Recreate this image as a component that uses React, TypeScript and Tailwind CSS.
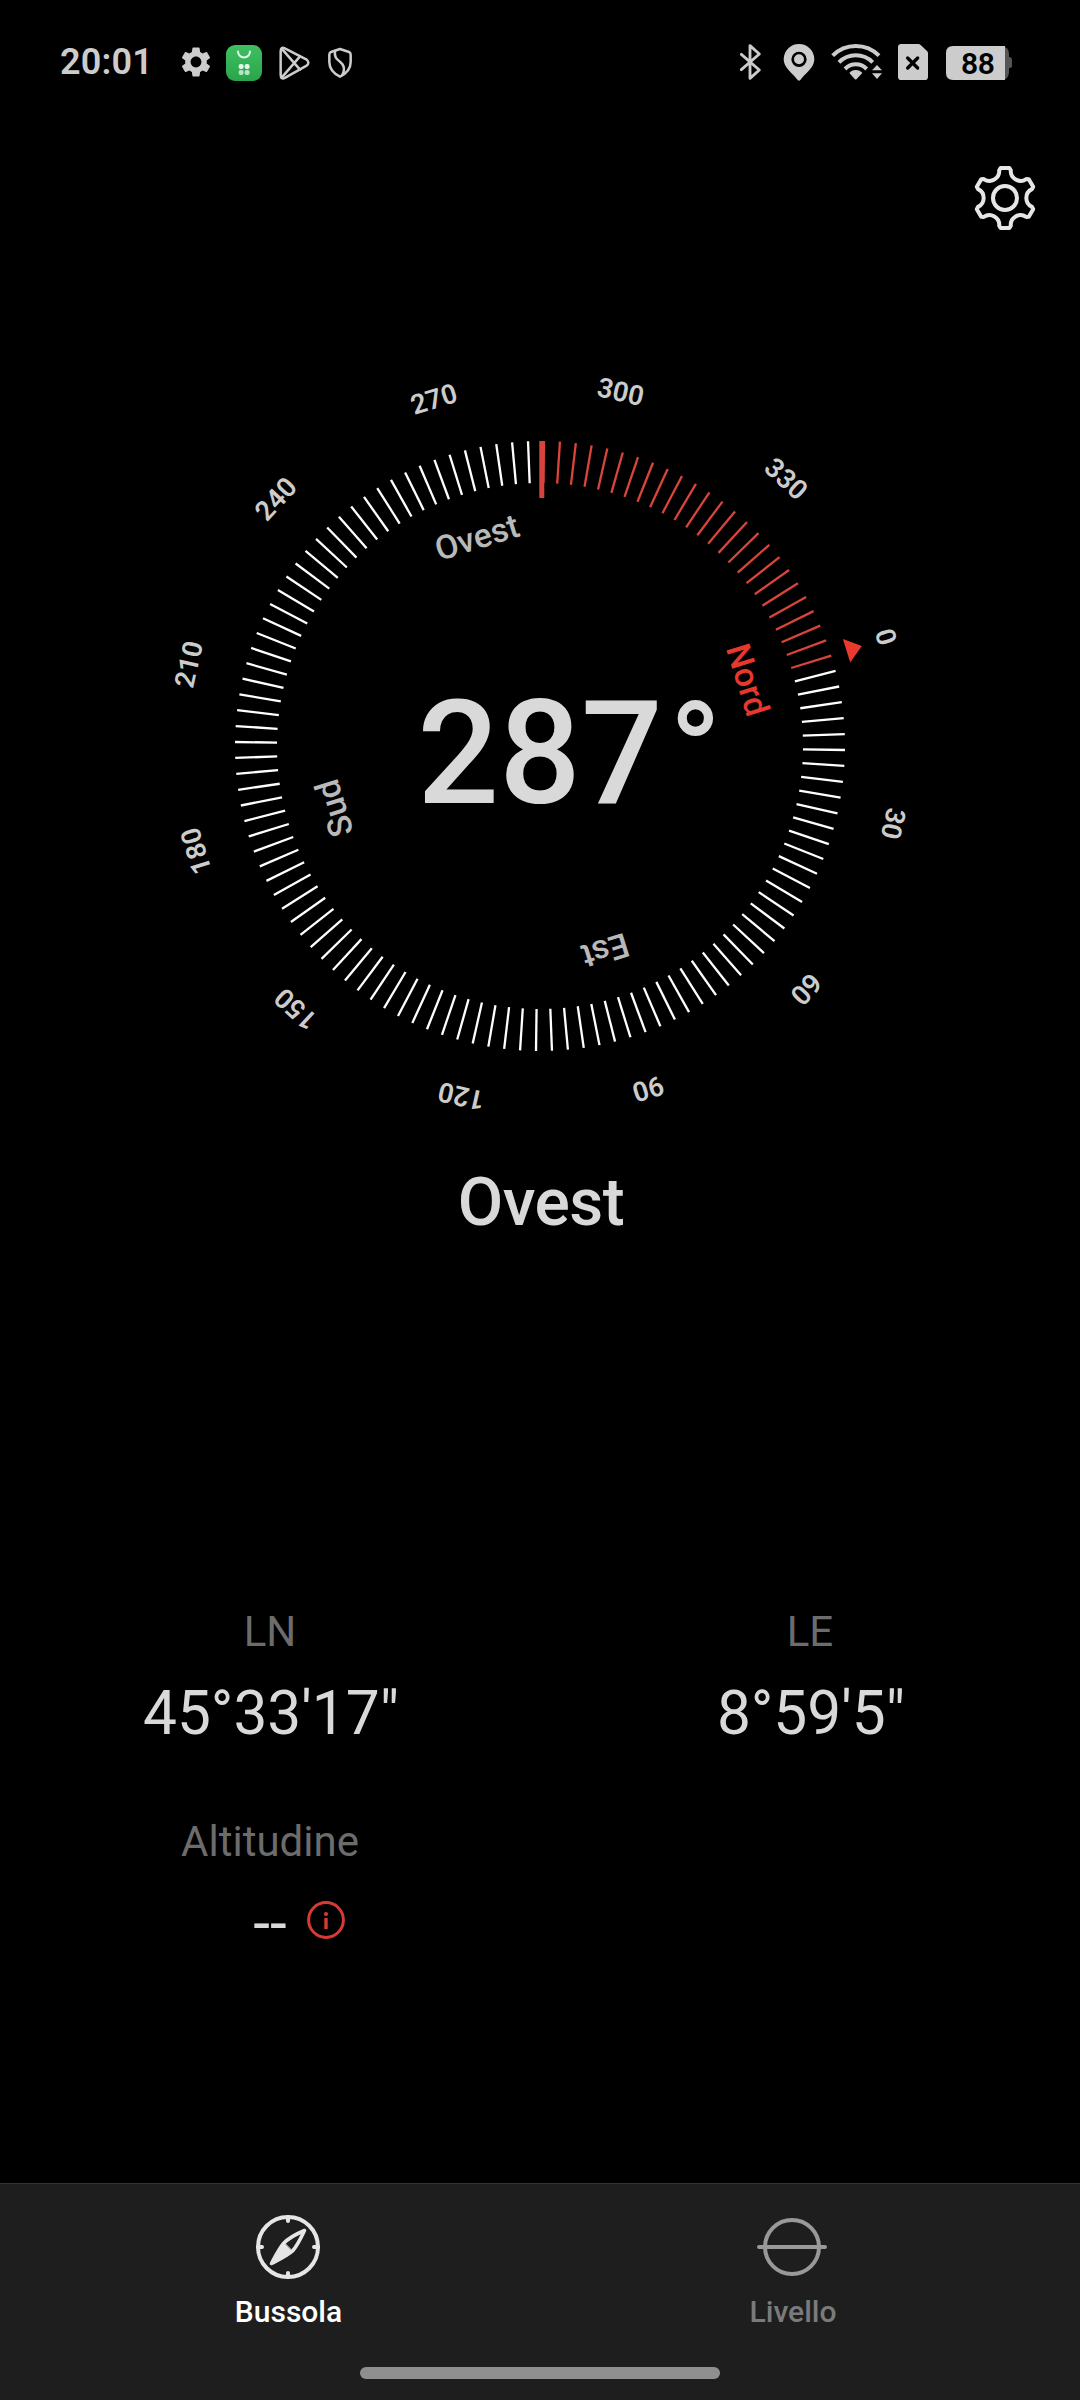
import React from "react";
import { MdSettings } from "react-icons/md";

const HEADING = 287.25;

const degreeLabels = [0, 30, 60, 90, 120, 150, 180, 210, 240, 270, 300, 330];

const cardinals = [
  { angle: 0, label: "Nord", color: "#e8382d" },
  { angle: 90, label: "Est", color: "#b9b9b9" },
  { angle: 180, label: "Sud", color: "#b9b9b9" },
  { angle: 270, label: "Ovest", color: "#b9b9b9" },
];

// one tooth + valley, repeated every 60deg
const gearOutline = () => {
  const turn = (x: number, y: number, deg: number) => {
    const a = (deg * Math.PI) / 180;
    const px = x * Math.cos(a) - y * Math.sin(a);
    const py = x * Math.sin(a) + y * Math.cos(a);
    return `${px.toFixed(2)} ${py.toFixed(2)}`;
  };
  let d = "";
  for (let i = 0; i < 6; i++) {
    const r = i * 60;
    d += `${i === 0 ? "M" : "L"}${turn(-4.4, -30, r)} L${turn(4.4, -30, r)} `;
    d += `L${turn(5.8, -27.8, r)} A9.8 9.8 0 0 0 ${turn(-5.8, -27.8, r + 60)} `;
  }
  return d + "Z";
};

const StatusBar: React.FC = () => {
  return (
    <div className="flex h-[124px] items-center justify-between pl-[60px] pr-[68px] text-[#cccccc]">
      <div className="flex items-center">
        <span className="w-[118px] text-[36px] font-semibold leading-[42px] tracking-[0.2px]">20:01</span>
        <MdSettings size={36} />
        <svg className="ml-3" width="36" height="40" viewBox="0 0 36 40">
          <defs>
            <linearGradient id="store" x1="0" y1="0" x2="0" y2="1">
              <stop offset="0" stopColor="#3fc062" />
              <stop offset="1" stopColor="#2aa44b" />
            </linearGradient>
          </defs>
          <rect y="3" width="36" height="36" rx="9" fill="url(#store)" />
          <path d="M12 9.5a6 6 0 0 0 12 0" fill="none" stroke="#e3f8e8" strokeWidth="2" strokeLinecap="round" />
          <g fill="#e3f8e8">
            <rect x="12.6" y="22" width="5" height="5" rx="2" />
            <rect x="18.6" y="22" width="5" height="5" rx="2" />
            <rect x="12.6" y="28" width="5" height="5" rx="2" opacity="0.75" />
            <rect x="18.6" y="28" width="5" height="5" rx="2" opacity="0.75" />
          </g>
        </svg>
        <svg className="ml-4" width="34" height="40" viewBox="0 0 102 120" fill="none" stroke="currentColor" strokeWidth="7.5" strokeLinejoin="round" strokeLinecap="round">
          <path d="M8 28Q8 12 22 20L86 53Q96 62 86 71L22 107Q8 114 8 98Z" />
          <path d="M11 20L66 83M11 107L66 43" />
        </svg>
        <svg className="ml-[14px]" width="28" height="40" viewBox="0 0 84 120" fill="none" stroke="currentColor" strokeWidth="7.5" strokeLinejoin="round" strokeLinecap="round">
          <path d="M42 21L69 30Q74 32 74 38V60Q74 88 42 104Q10 88 10 60V38Q10 32 15 30Z" />
          <path d="M27 27C24 48 34 52 43 60C58 72 57 84 49 99" />
        </svg>
      </div>

      <div className="flex items-center">
        <svg width="26" height="40" viewBox="0 0 78 120" fill="none" stroke="currentColor" strokeWidth="8.5" strokeLinejoin="round" strokeLinecap="round">
          <path d="M10 37L64 84L36 109V11L64 36L10 83" />
        </svg>
        <svg className="ml-[18px]" width="34" height="40" viewBox="0 0 102 120">
          <path d="M51 6A46 46 0 0 1 97 52C97 78 70 94 55 114Q51 119 47 114C32 94 5 78 5 52A46 46 0 0 1 51 6Z" fill="currentColor" />
          <circle cx="51" cy="52" r="19" fill="currentColor" stroke="#000" strokeWidth="8" />
        </svg>
        <svg className="ml-[14px]" width="54" height="40" viewBox="0 0 162 120">
          <g fill="none" stroke="currentColor" strokeWidth="12">
            <path d="M8 41A98 98 0 0 1 147 41" />
            <path d="M27 61A71 71 0 0 1 128 61" />
            <path d="M45 81A45 45 0 0 1 110 81" />
          </g>
          <g fill="currentColor">
            <path d="M77 84Q90 84 97 93L80 111Q77 114 74 111L58 93Q65 84 77 84Z" />
            <path d="M141 69L156 85H126ZM141 111L126 94H156Z" />
          </g>
        </svg>
        <svg className="ml-[14px]" width="30" height="40" viewBox="0 0 90 120">
          <path d="M10 6H61Q65 6 68 9L87 27Q90 30 90 34V104Q90 114 80 114H10Q0 114 0 104V16Q0 6 10 6Z" fill="currentColor" />
          <path d="M29 48L59 78M59 48L29 78" stroke="#000" strokeWidth="10" strokeLinecap="round" />
        </svg>
        <div className="relative ml-[18px] h-[34px] w-[66px]">
          <svg className="mt-px" width="66" height="34" viewBox="0 0 66 34">
            <path d="M56 0Q63 1 63 8V11Q66 11 66 14V20Q66 22 63 22V26Q63 33 56 34Z" fill="#555555" />
            <path d="M7 0H59V34H7Q0 34 0 27V7Q0 0 7 0Z" fill="currentColor" />
          </svg>
          <span className="absolute left-[15px] top-px text-[30px] font-semibold leading-[35px] tracking-[-0.5px] text-black">88</span>
        </div>
      </div>
    </div>
  );
};

const Dial: React.FC = () => {
  const ticks = Array.from({ length: 120 }, (_, i) => i * 3);

  return (
    <svg className="mx-auto mt-[94px] block" width="760" height="760" viewBox="-380 -380 760 760">
      <g transform={`rotate(${-HEADING})`}>
        {ticks.map((deg) => (
          <line
            key={deg}
            y1={-305}
            y2={-263}
            stroke={deg === 0 || deg >= 288 ? "#d9453b" : "#ffffff"}
            strokeWidth="2.3"
            transform={`rotate(${deg})`}
          />
        ))}
        <path d="M0 -337L12.3 -321H-12.3Z" fill="#ea3a2e" />
      </g>
      <g transform={`translate(1 -2) rotate(${-HEADING})`} textAnchor="middle">
        {degreeLabels.map((deg) => (
          <text key={deg} y={-351.7} fontSize="27.3" fontWeight="600" fill="#cccccc" transform={`rotate(${deg})`}>
            {deg}
          </text>
        ))}
        {cardinals.map((item) => (
          <text key={item.label} y={-204.8} fontSize="33.6" fontWeight="550" fill={item.color} transform={`rotate(${item.angle})`}>
            {item.label}
          </text>
        ))}
      </g>
      <rect x="-0.7" y="-305" width="5" height="57" fill="#d8433f" />
      <text x="0" y="56.5" textAnchor="middle" fontSize="144" fontWeight="500" fill="#d9d9d9">
        287
      </text>
      <text x="129" y="52.5" fontSize="138" fontWeight="500" fill="#d9d9d9">
        °
      </text>
    </svg>
  );
};

type ReadingProps = {
  label: string;
  children: React.ReactNode;
};

const Reading: React.FC<ReadingProps> = ({ label, children }) => (
  <div className="flex flex-col items-center">
    <span className="text-[42px] leading-[50px] text-[#6c6c6c]">{label}</span>
    <div className="mt-[22px] flex items-center pl-0.5 text-[60.4px] leading-[70px] text-[#d9d9d9]">{children}</div>
  </div>
);

const BottomNav: React.FC = () => {
  return (
    <nav className="mt-auto flex h-[217px] flex-col border-t border-[#333333] bg-[#1e1e1e]">
      <div className="grid grid-cols-2 px-9 pt-[27px] text-[30px] font-medium leading-9">
        <button className="flex flex-col items-center text-white">
          <svg width="72" height="72" viewBox="-36 -36 72 72" fill="none" stroke="#e6e6e6" strokeWidth="4" strokeLinecap="round" strokeLinejoin="round">
            <circle r="30" />
            <path d="M0 -30V-26M0 30V26M-30 0H-26M30 0H26" />
            <path d="M16.5 -16.5C7 -12.5 0 -8.5 -4.5 -3.5C-9 2 -13 10 -16.5 16.5C-10 13 -1 9 4.5 4C9 -1 13 -9 16.5 -16.5Z" strokeWidth="3.6" />
            <path d="M-4 -4C-9 2 -13 10 -16.5 16.5C-10 13 -1 9 4 4Z" fill="#e6e6e6" strokeWidth="1" />
          </svg>
          <span className="mt-[11px] pl-px">Bussola</span>
        </button>
        <button className="flex flex-col items-center text-[#7b7b7b]">
          <svg width="72" height="72" viewBox="-36 -36 72 72" fill="none" stroke="#999999" strokeWidth="4" strokeLinecap="round">
            <circle r="27" />
            <path d="M-33 0H33" />
          </svg>
          <span className="mt-[11px] pl-0.5">Livello</span>
        </button>
      </div>
      <div className="mx-auto mb-[21px] mt-auto h-3 w-[360px] rounded-full bg-[#8f8f8f]" />
    </nav>
  );
};

export default function App() {
  return (
    <div className="flex h-[2400px] w-[1080px] flex-col overflow-hidden bg-black font-['Roboto',sans-serif]">
      <StatusBar />

      <div className="flex h-[148px] items-center justify-end pr-[39px]">
        <svg width="72" height="72" viewBox="-36 -36 72 72" fill="none" stroke="#e6e6e6" strokeWidth="4" strokeLinejoin="round">
          <path d={gearOutline()} />
          <circle r="12" />
        </svg>
      </div>

      <Dial />

      <h1 className="mt-[38px] pl-0.5 text-center text-[66px] font-[550] leading-[78px] tracking-[-0.5px] text-[#d9d9d9]">Ovest</h1>

      <div className="mt-[365px] grid grid-cols-2 gap-y-[68px]">
        <Reading label="LN">45°33'17"</Reading>
        <Reading label="LE">8°59'5"</Reading>
        <Reading label="Altitudine">
          <span className="pl-14">--</span>
          <svg className="mb-2 ml-5" width="38" height="38" viewBox="0 0 38 38">
            <circle cx="19" cy="19" r="17.4" fill="none" stroke="#d63a34" strokeWidth="3" />
            <circle cx="19" cy="13" r="2.1" fill="#d63a34" />
            <path d="M19 17V28" stroke="#d63a34" strokeWidth="3.4" />
          </svg>
        </Reading>
      </div>

      <BottomNav />
    </div>
  );
}
